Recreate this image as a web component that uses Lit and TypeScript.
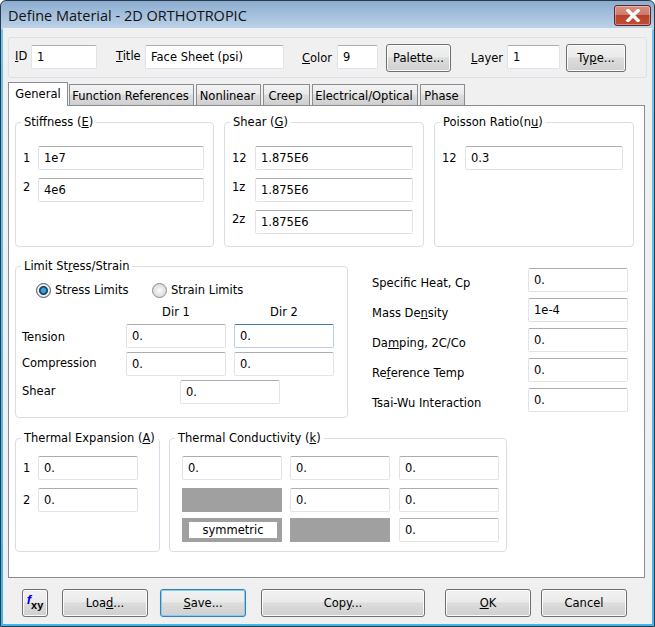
import { LitElement, html, css } from "lit";
import { customElement } from "lit/decorators.js";

@customElement("app-root")
export class AppRoot extends LitElement {
  static styles = css`
    :host { display: block; width: 655px; height: 627px; font: 11.5px/14px "DejaVu Sans", sans-serif; color: #000; overflow: hidden; }
    * { box-sizing: border-box; }
    .win { width: 655px; height: 627px; border: 1px solid #2b3a4a; border-radius: 6px 6px 0 0; background: linear-gradient(#8cadd0 0, #bdd3e9 28px, #6fc3ec 29px, #3fb6ea 100%); padding: 0 2px 2px 2px; display: flex; flex-direction: column; }
    .title { height: 27px; flex: none; display: flex; align-items: flex-start; justify-content: space-between; }
    .title span { font: 14.5px/29px "Open Sans", sans-serif; margin-left: 5px; color: #111; }
    .close { width: 37px; height: 21px; margin: 4px 1px 0 0; border: 1px solid #5a2a2a; border-radius: 3px; background: linear-gradient(#d98e80 0, #cf7a6a 45%, #b8432b 50%, #c04c34 100%); display: flex; align-items: center; justify-content: center; box-shadow: inset 0 0 0 1px rgba(255,255,255,.35); }
    .body { flex: 1; background: #f0f0f0; padding: 9px 0 0 5px; display: flex; flex-direction: column; min-height: 0; }
    .top { height: 41px; width: 639px; flex: none; border: 1px solid #dce1e7; border-radius: 3px; display: flex; align-items: center; }
    .top label { display: block; }
    .top .in { margin-bottom: 2px; }
    .top .l1 { margin: 0 0 3px 6px; width: 16px; }
    .top .i1 { width: 66px; }
    .top .l2 { margin: 0 0 3px 19px; width: 29px; }
    .top .i2 { width: 139px; }
    .top .l3 { margin: 0 0 -1px 18px; width: 35px; }
    .top .i3 { width: 41px; }
    .top .btn { margin-left: 8px; width: 65px; }
    .top .l4 { margin: 0 0 -1px 20px; width: 36px; }
    .top .i4 { width: 53px; }
    .top .btn2 { margin-left: 6px; width: 60px; }

    .tabs { display: flex; flex: none; height: 23px; margin-top: 4px; align-items: flex-end; position: relative; z-index: 1; }
    .tab { height: 21px; margin-right: 2px; padding-right: 2px; border: 1px solid #898c95; border-bottom: 0; background: linear-gradient(#f2f2f2 0, #ebebeb 45%, #dddddd 50%, #cfcfcf 100%); text-align: center; line-height: 22px; border-radius: 1px 1px 0 0; }
    .tab.on { height: 24px; padding-right: 0; background: #fff; margin-right: 1px; line-height: 22px; margin-bottom: -1px; }

    .panel { width: 637px; height: 473px; flex: none; background: #fff; border: 1px solid #898c95; padding: 9px 0 0 6px; display: flex; flex-direction: column; }
    .row { display: flex; }
    fieldset { margin: 0; border: 1px solid #d5dfe5; border-radius: 4px; padding: 0; min-width: 0; }
    legend { margin-left: 5px; padding: 0 3px; height: 14px; line-height: 14px; white-space: nowrap; }
    .in { display: flex; align-items: center; height: 24px; background: #fff; border: 1px solid #e2e3ea; border-top-color: #abadb3; border-radius: 2px; padding: 0 0 0 5px; line-height: 14px; }
    .in.focus { border-color: #b5cfe7; border-top-color: #3d7bad; }

    .r1 { gap: 10px; height: 132px; }
    .r1 fieldset { width: 200px; }
    .r1 fieldset.first { width: 199px; }
    .stack { display: grid; row-gap: 8px; padding-top: 17px; }
    .stiff { grid-template-columns: 15px 166px; padding-left: 7px; }
    .shear { grid-template-columns: 30px 158px; padding: 17px 0 0 0; }
    .shear label { margin-left: 7px; }
    .lb { align-self: center; }
    .lb.up { margin-bottom: 7px; }
    .r2 { margin-top: 12px; height: 159px; }
    .limit { width: 333px; }
    .radios { display: flex; height: 27px; padding: 7px 0 0 20px; align-items: center; }
    .radio { width: 15px; height: 15px; border-radius: 50%; border: 1px solid #8a8a8a; background: radial-gradient(#fbfbfb, #cfcfcf); margin-right: 4px; flex: none; }
    .radio.on { background: radial-gradient(circle, #3aa6e0 0 2px, #123f66 3.5px, #123f66 4px, #eeeeee 5px, #d5d5d5 100%); border-color: #555; }
    .radios .t { width: 97px; }
    .lim { display: grid; grid-template-columns: 96px 100px 100px; column-gap: 8px; row-gap: 4px; padding-left: 6px; }
    .dir { text-align: center; height: 20px; line-height: 24px; }
    .sh { grid-column: 2 / 4; margin-left: 54px; width: 100px; }
    .lim .lb.nudge { margin-bottom: 3px; }
    .lim .lb.down { padding-top: 2px; }
    .props { display: grid; grid-template-columns: 156px 100px; row-gap: 6px; margin: 9px 0 0 24px; align-content: start; }
    .props .lb { padding-top: 6px; }
    .r3 { margin-top: 13px; height: 121px; gap: 9px; }
    .exp { width: 145px; }
    .exp .stack { grid-template-columns: 15px 100px; padding: 11px 0 0 7px; }
    .cond { width: 338px; }
    .cg { display: grid; grid-template-columns: 100px 100px 101px; column-gap: 8px; grid-template-rows: 24px 24px 24px; row-gap: 8px; padding: 11px 0 0 12px; }
    .cg > :nth-child(3n) { margin-left: 1px; }
    .cg > :nth-child(n+7) { margin-top: -2px; }
    .gray { background: #a0a0a0; height: 24px; }
    .sym { display: flex; align-items: center; justify-content: center; padding: 4px 5px 4px 7px; }
    .sym span { background: #fff; width: 88px; height: 16px; text-align: center; line-height: 16px; }

    .foot { flex: none; display: flex; margin: 11px 0 0 14px; height: 28px; }
    .btn { height: 28px; border: 1px solid #707070; border-radius: 3px; background: linear-gradient(#f2f2f2 0, #ebebeb 45%, #dddddd 50%, #cfcfcf 100%); display: flex; align-items: center; justify-content: center; box-shadow: inset 0 0 0 1px #fbfbfb; }
    .btn.def { border-color: #3c7fb1; box-shadow: inset 0 0 0 1px #7fd0ee, 0 0 1px #7fd0ee; }
    .fxy { width: 26px; }
    .fxy b { color: #0000e0; font: italic 700 13px/14px "Liberation Sans", sans-serif; margin-top: -6px; }
    .fxy i { font: 700 11px/12px "Liberation Sans", sans-serif; margin: 4px 0 0 0; }
  `;

  render() {
    return html`<div class="win">
      <div class="title"><span>Define Material - 2D ORTHOTROPIC</span>
        <div class="close"><svg width="16" height="13" viewBox="0 0 16 13"><path d="M3 1.5 13 11.5M13 1.5 3 11.5" fill="none" stroke="#fff" stroke-width="3.4" stroke-linecap="square"/></svg></div>
      </div>
      <div class="body">
        <div class="top">
          <label class="l1"><u>I</u>D</label><div class="in i1">1</div>
          <label class="l2"><u>T</u>itle</label><div class="in i2">Face Sheet (psi)</div>
          <label class="l3"><u>C</u>olor</label><div class="in i3">9</div>
          <div class="btn">Palette...</div>
          <label class="l4"><u>L</u>ayer</label><div class="in i4">1</div>
          <div class="btn btn2"><span>Ty<u>p</u>e...</span></div>
        </div>
        <div class="tabs">
          <div class="tab on" style="width:60px">General</div>
          <div class="tab" style="width:125px">Function References</div>
          <div class="tab" style="width:65px">Nonlinear</div>
          <div class="tab" style="width:47px">Creep</div>
          <div class="tab" style="width:106px">Electrical/Optical</div>
          <div class="tab" style="width:45px">Phase</div>
        </div>
        <div class="panel">
          <div class="row r1">
            <fieldset class="first"><legend>Stiffness (<u>E</u>)</legend>
              <div class="stack stiff">
                <label class="lb">1</label><div class="in">1e7</div>
                <label class="lb up">2</label><div class="in">4e6</div>
              </div></fieldset>
            <fieldset><legend>Shear (<u>G</u>)</legend>
              <div class="stack shear">
                <label class="lb">12</label><div class="in">1.875E6</div>
                <label class="lb up">1z</label><div class="in">1.875E6</div>
                <label class="lb up">2z</label><div class="in">1.875E6</div>
              </div></fieldset>
            <fieldset><legend>Poisson Ratio(n<u>u</u>)</legend>
              <div class="stack shear">
                <label class="lb">12</label><div class="in">0.3</div>
              </div></fieldset>
          </div>
          <div class="row r2">
            <fieldset class="limit"><legend>Limit St<u>r</u>ess/Strain</legend>
              <div class="radios"><div class="radio on"></div><div class="t">Stress Limits</div><div class="radio"></div><div class="t">Strain Limits</div></div>
              <div class="lim">
                <div></div><div class="dir">Dir 1</div><div class="dir">Dir 2</div>
                <label class="lb down">Tension</label><div class="in">0.</div><div class="in focus">0.</div>
                <label class="lb nudge">Compression</label><div class="in">0.</div><div class="in">0.</div>
                <label class="lb nudge">Shear</label><div class="in sh">0.</div>
              </div>
            </fieldset>
            <div class="props">
              <label class="lb">Specific Heat, Cp</label><div class="in">0.</div>
              <label class="lb">Mass De<u>n</u>sity</label><div class="in">1e-4</div>
              <label class="lb">Da<u>m</u>ping, 2C/Co</label><div class="in">0.</div>
              <label class="lb">Re<u>f</u>erence Temp</label><div class="in">0.</div>
              <label class="lb">Tsai-Wu Interaction</label><div class="in">0.</div>
            </div>
          </div>
          <div class="row r3">
            <fieldset class="exp"><legend>Thermal Expansion (<u>A</u>)</legend>
              <div class="stack">
                <label class="lb">1</label><div class="in">0.</div>
                <label class="lb">2</label><div class="in">0.</div>
              </div></fieldset>
            <fieldset class="cond"><legend>Thermal Conductivity (<u>k</u>)</legend>
              <div class="cg">
                <div class="in">0.</div><div class="in">0.</div><div class="in">0.</div>
                <div class="gray"></div><div class="in">0.</div><div class="in">0.</div>
                <div class="gray sym"><span>symmetric</span></div><div class="gray"></div><div class="in">0.</div>
              </div></fieldset>
          </div>
        </div>
        <div class="foot">
          <div class="btn fxy"><b>f</b><i>xy</i></div>
          <div class="btn" style="width:86px;margin-left:14px"><span>Loa<u>d</u>...</span></div>
          <div class="btn def" style="width:86px;margin-left:12px"><span><u>S</u>ave...</span></div>
          <div class="btn" style="width:164px;margin-left:15px"><span>Cop<u>y</u>...</span></div>
          <div class="btn" style="width:86px;margin-left:20px"><span><u>O</u>K</span></div>
          <div class="btn" style="width:86px;margin-left:10px">Cancel</div>
        </div>
      </div>
    </div>`;
  }
}
